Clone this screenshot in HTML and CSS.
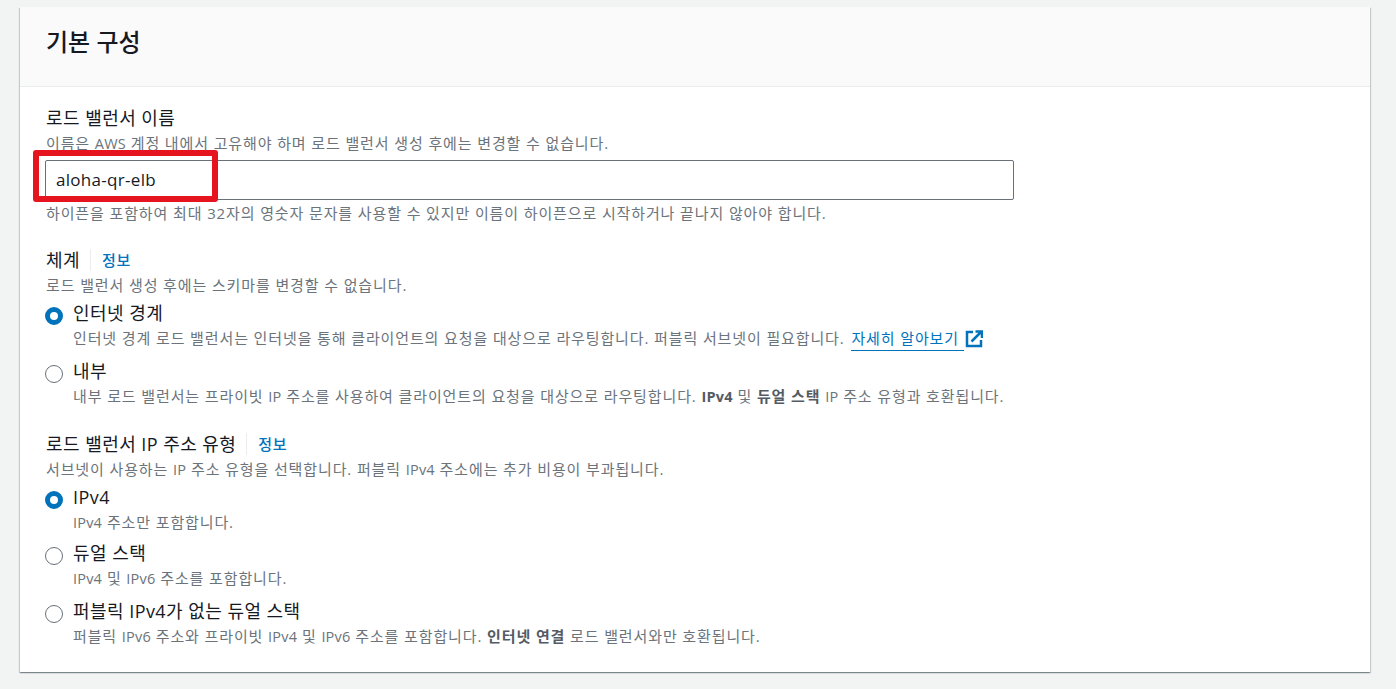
FILE: index.html
```html
<!DOCTYPE html>
<html lang="ko">
<head>
<meta charset="utf-8">
<title>기본 구성</title>
<link rel="stylesheet" href="styles.css">
</head>
<body>
<main class="card">
  <header class="card-head"><h2>기본 구성</h2></header>
  <div class="card-body">
    <section class="field name-field">
      <div class="label">로드 밸런서 이름</div>
      <div class="hint">이름은 <span class="lat">AWS</span> 계정 내에서 고유해야 하며 로드 밸런서 생성 후에는 변경할 수 없습니다.</div>
      <div class="input">aloha-qr-elb</div>
      <div class="hint">하이픈을 포함하여 최대 32자의 영숫자 문자를 사용할 수 있지만 이름이 하이픈으로 시작하거나 끝나지 않아야 합니다.</div>
      <div class="highlight"></div>
    </section>
    <section class="field scheme">
      <div class="label"><span>체계</span><a class="info">정보</a></div>
      <div class="hint">로드 밸런서 생성 후에는 스키마를 변경할 수 없습니다.</div>
      <div class="radios">
        <div class="radio on">
          <span class="dot"></span>
          <div><div class="opt">인터넷 경계</div>
          <div class="hint">인터넷 경계 로드 밸런서는 인터넷을 통해 클라이언트의 요청을 대상으로 라우팅합니다. 퍼블릭 서브넷이 필요합니다. <a class="more">자세히 알아보기</a><svg class="ext" width="18" height="18" viewBox="0 0 18 18"><path d="M8 2H2v14h14v-6" fill="none" stroke="#0073bb" stroke-width="2.500"/><path d="M6.500 11.500L15.500 2.500M10.500 1.500h6.500v6.500" fill="none" stroke="#0073bb" stroke-width="2.500"/></svg></div></div>
        </div>
        <div class="radio">
          <span class="dot"></span>
          <div><div class="opt">내부</div>
          <div class="hint">내부 로드 밸런서는 프라이빗 <span class="lat">IP</span> 주소를 사용하여 클라이언트의 요청을 대상으로 라우팅합니다. <b class="lat">IPv4</b> 및 <b>듀얼 스택</b> <span class="lat">IP</span> 주소 유형과 호환됩니다.</div></div>
        </div>
      </div>
    </section>
    <section class="field iptype">
      <div class="label"><span>로드 밸런서 IP 주소 유형</span><a class="info">정보</a></div>
      <div class="hint">서브넷이 사용하는 <span class="lat">IP</span> 주소 유형을 선택합니다. 퍼블릭 <span class="lat">IPv4</span> 주소에는 추가 비용이 부과됩니다.</div>
      <div class="radios">
        <div class="radio on">
          <span class="dot"></span>
          <div><div class="opt">IPv4</div>
          <div class="hint"><span class="lat">IPv4</span> 주소만 포함합니다.</div></div>
        </div>
        <div class="radio">
          <span class="dot"></span>
          <div><div class="opt">듀얼 스택</div>
          <div class="hint"><span class="lat">IPv4</span> 및 <span class="lat">IPv6</span> 주소를 포함합니다.</div></div>
        </div>
        <div class="radio">
          <span class="dot"></span>
          <div><div class="opt">퍼블릭 IPv4가 없는 듀얼 스택</div>
          <div class="hint">퍼블릭 <span class="lat">IPv6</span> 주소와 프라이빗 <span class="lat">IPv4</span> 및 <span class="lat">IPv6</span> 주소를 포함합니다. <b>인터넷 연결</b> 로드 밸런서와만 호환됩니다.</div></div>
        </div>
      </div>
    </section>
  </div>
</main>
</body>
</html>
```

FILE: styles.css
```css
* { box-sizing: border-box; }
html, body { margin: 0; height: 100%; }
body {
  background: #f2f3f3;
  padding: 7px 26px 0 20px;
  font-family: "Open Sans", "Noto Sans CJK KR", sans-serif;
  color: #16191f;
  overflow: hidden;
}
.card {
  height: 665px;
  background: #fff;
  box-shadow: 0 1px 1px 0 rgba(0, 28, 36, .3), 1px 1px 1px 0 rgba(0, 28, 36, .15), -1px 1px 1px 0 rgba(0, 28, 36, .15);
}
.card-head {
  height: 80px;
  background: #fafafa;
  border-bottom: 1px solid #eaeded;
  padding: 19px 26px 0;
}
h2 { margin: 0; font-size: 24px; line-height: 32px; font-weight: 500; }
.card-body { padding: 19px 26px 0; }
.field { position: relative; width: 968px; }
.label { font-size: 18px; letter-spacing: .45px; line-height: 24px; display: flex; align-items: center; }
.hint { height: 22px; font-size: 15px; letter-spacing: .88px; line-height: 22px; margin-top: 2px; color: #6b737b; white-space: nowrap; }
.hint b { font-weight: 700; color: #545b64; }
.lat { font-size: 14.500px; letter-spacing: .2px; line-height: 0; }
.input {
  margin: 6px 0 0 -1px;
  height: 40px;
  width: 969px;
  border: 1px solid #687078;
  border-radius: 2px;
  padding: 0 10px;
  font-size: 17px;
  letter-spacing: .3px;
  line-height: 38px;
}
.highlight {
  position: absolute;
  left: -13px; top: 44px;
  width: 185px; height: 52px;
  border: 6px solid #e5141f;
  border-radius: 3px;
}
.scheme { margin-top: 24px; }
.iptype { margin-top: 25px; }
.info {
  font-size: 15px;
  letter-spacing: .6px;
  color: #0073bb;
  font-weight: 500;
  margin-left: 10px;
  padding-left: 11px;
  border-left: 1px solid #eaeded;
  line-height: 22px;
}
.radios { display: flex; flex-direction: column; gap: 10px; margin-top: 5px; }
.iptype .radio.on + .radio { margin-top: -2px; }
.radio { display: flex; gap: 10px; align-items: flex-start; }
.dot {
  flex: none;
  width: 18px; height: 18px;
  margin: 6px 0 0 -1px;
  border-radius: 50%;
  border: 1.500px solid #687078;
  background: #fff;
}
.radio.on .dot { border: 5px solid #0073bb; }
.opt { font-size: 18px; letter-spacing: .45px; line-height: 24px; }
.more { color: #0073bb; border-bottom: 1px solid #0073bb; padding-bottom: 2px; padding-right: 5px; margin: 0 1px 0 2px; }
.ext { vertical-align: -4px; }
```
